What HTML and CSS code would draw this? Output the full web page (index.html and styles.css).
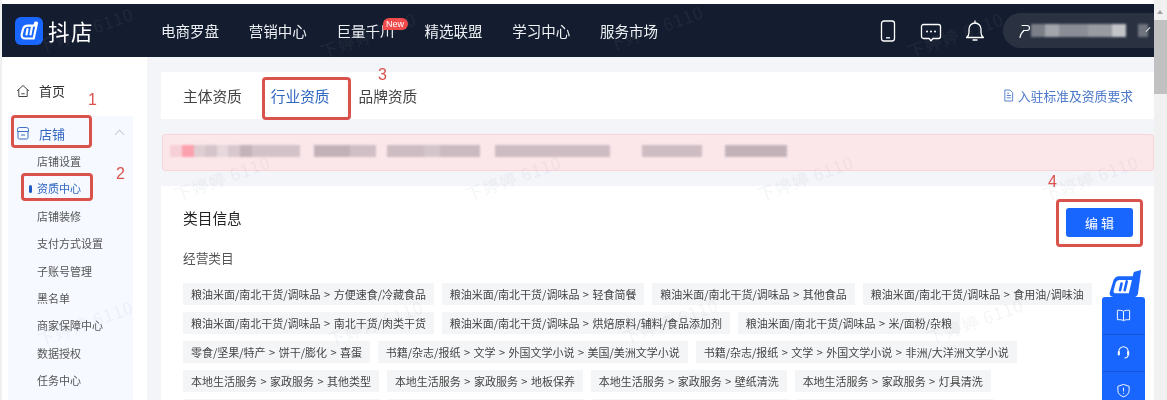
FILE: index.html
```html
<!DOCTYPE html>
<html lang="zh-CN">
<head>
<meta charset="utf-8">
<title>抖店 资质中心</title>
<link rel="stylesheet" href="styles.css">
</head>
<body>
<div class="page">
  <div class="main">
    <header class="topbar">
      <div class="brand">
        <svg class="brand-icon" viewBox="0 0 28 28"><rect width="28" height="28" rx="6" fill="#1966ff"/><path d="M21.500 5.500h-1.200l-.9 3.200H13c-3 0-4.400 1.300-5 3.600L6.800 17c-.6 2.800.6 4.500 3.400 4.500h8.500L22 6z" fill="none" stroke="#fff" stroke-width="2.200" stroke-linejoin="round"/><path d="M12.500 12l-1 5.500M17 9.500l-1.500 8" stroke="#fff" stroke-width="2.200" stroke-linecap="round"/></svg>
        <span class="brand-name">抖店</span>
      </div>
      <nav class="nav">
        <span>电商罗盘</span>
        <span>营销中心</span>
        <span class="nav-new">巨量千川<i class="new-badge">New</i></span>
        <span>精选联盟</span>
        <span>学习中心</span>
        <span>服务市场</span>
      </nav>
      <div class="tools">
        <svg class="tool" viewBox="0 0 20 24"><rect x="3.500" y="2" width="13" height="20" rx="2.500" fill="none" stroke="#fff" stroke-width="1.300"/><path d="M8 18.800h4" stroke="#fff" stroke-width="1.300"/></svg>
        <svg class="tool tool-chat" viewBox="0 0 22 22"><path d="M3.500 3.500h15a2 2 0 0 1 2 2v10a2 2 0 0 1-2 2h-5.500L11 19.800 9 17.500H3.500a2 2 0 0 1-2-2v-10a2 2 0 0 1 2-2z" fill="none" stroke="#fff" stroke-width="1.300"/><circle cx="7" cy="10.500" r="1" fill="#fff"/><circle cx="11" cy="10.500" r="1" fill="#fff"/><circle cx="15" cy="10.500" r="1" fill="#fff"/></svg>
        <svg class="tool tool-bell" viewBox="0 0 22 24"><path d="M2.500 18.500c1.500-1 2.500-2.500 2.500-5V10a6 6 0 0 1 12 0v3.500c0 2.500 1 4 2.500 5z" fill="none" stroke="#fff" stroke-width="1.300" stroke-linejoin="round"/><path d="M9 21h4M11 2v2" stroke="#fff" stroke-width="1.300" stroke-linecap="round"/></svg>
        <div class="user">
          <svg class="user-icon" viewBox="0 0 12 16"><path d="M2 14.500c.5-3 2-5.500 4-7M4 2.500h5a2.500 2.500 0 0 1 0 5H5.500" fill="none" stroke="#fff" stroke-width="1.200" stroke-linecap="round"/></svg>
          <div class="user-blur"></div>
          <div class="user-blur user-blur-2"></div>
          <span class="user-arrow"></span>
        </div>
      </div>
    </header>
    <div class="body">
      <aside class="sidebar">
        <div class="home">
          <svg class="side-icon" viewBox="0 0 14 14"><path d="M1 7 7 1.500 13 7M2.800 5.500V12.500h8.400V5.500M5.300 9.800h3.400" fill="none" stroke="#444" stroke-width="1"/></svg>
          <span>首页</span>
        </div>
        <div class="group">
          <div class="group-head">
            <svg class="side-icon" viewBox="0 0 14 14"><path d="M3.500 1.500h7a2 2 0 0 1 2 2v2H1.500v-2a2 2 0 0 1 2-2zM2 5.500v6a1.500 1.500 0 0 0 1.500 1.500h7a1.500 1.500 0 0 0 1.500-1.500v-6M5 9h4" fill="none" stroke="#3d6fc4" stroke-width="1"/></svg>
            <span>店铺</span>
            <i class="chevron"></i>
          </div>
          <ul class="submenu">
            <li>店铺设置</li>
            <li class="active">资质中心</li>
            <li>店铺装修</li>
            <li>支付方式设置</li>
            <li>子账号管理</li>
            <li>黑名单</li>
            <li>商家保障中心</li>
            <li>数据授权</li>
            <li>任务中心</li>
          </ul>
        </div>
      </aside>
      <main class="content">
        <section class="tabs">
          <span class="tab">主体资质</span>
          <span class="tab tab-active">行业资质</span>
          <span class="tab">品牌资质</span>
          <a class="standard">
            <svg class="doc-icon" viewBox="0 0 12 14"><path d="M2 1h5.500L10.500 4v9H2z M4 7h4.500M4 9.500h4.500M4.500 4.500h2" fill="none" stroke="#4a78c8" stroke-width="1"/></svg>
            入驻标准及资质要求
          </a>
        </section>
        <section class="alert">
          <div class="alert-blur"></div>
        </section>
        <section class="card">
          <div class="card-head">
            <h2>类目信息</h2>
            <button class="edit">编 辑</button>
          </div>
          <div class="label">经营类目</div>
          <div class="tags">
            <div class="tag-row">
              <span class="tag">粮油米面/南北干货/调味品 &gt; 方便速食/冷藏食品</span>
              <span class="tag">粮油米面/南北干货/调味品 &gt; 轻食简餐</span>
              <span class="tag">粮油米面/南北干货/调味品 &gt; 其他食品</span>
              <span class="tag">粮油米面/南北干货/调味品 &gt; 食用油/调味油</span>
            </div>
            <div class="tag-row">
              <span class="tag">粮油米面/南北干货/调味品 &gt; 南北干货/肉类干货</span>
              <span class="tag">粮油米面/南北干货/调味品 &gt; 烘焙原料/辅料/食品添加剂</span>
              <span class="tag">粮油米面/南北干货/调味品 &gt; 米/面粉/杂粮</span>
            </div>
            <div class="tag-row">
              <span class="tag">零食/坚果/特产 &gt; 饼干/膨化 &gt; 喜蛋</span>
              <span class="tag">书籍/杂志/报纸 &gt; 文学 &gt; 外国文学小说 &gt; 美国/美洲文学小说</span>
              <span class="tag">书籍/杂志/报纸 &gt; 文学 &gt; 外国文学小说 &gt; 非洲/大洋洲文学小说</span>
            </div>
            <div class="tag-row">
              <span class="tag">本地生活服务 &gt; 家政服务 &gt; 其他类型</span>
              <span class="tag">本地生活服务 &gt; 家政服务 &gt; 地板保养</span>
              <span class="tag">本地生活服务 &gt; 家政服务 &gt; 壁纸清洗</span>
              <span class="tag">本地生活服务 &gt; 家政服务 &gt; 灯具清洗</span>
            </div>
            <div class="tag-row">
              <span class="tag tag-blank"></span>
              <span class="tag tag-blank"></span>
              <span class="tag tag-blank"></span>
              <span class="tag tag-blank"></span>
            </div>
          </div>
        </section>
      </main>
    </div>
  </div>
  <div class="scrollbar">
    <div class="scroll-up"></div>
    <div class="scroll-thumb"></div>
  </div>

  <svg class="float-logo" viewBox="0 0 34 28"><path d="M32.500 1 25.500 3 24.500 7H12C8 7 6.500 9 5.500 12L2.500 22C1.500 25 3 27 6 27H26C28 27 29 26 29.500 24Z" fill="#1966ff"/><path d="M12 10.500H23.700L20.700 23.500H8C6.500 23.500 5.700 22.500 6 21L8 13.500C8.500 11.500 10 10.500 12 10.500Z" fill="#fff"/><path d="M13.700 14 12.200 20.500M18.700 12 16.700 20.500" stroke="#1966ff" stroke-width="2.500" stroke-linecap="round"/></svg>
  <div class="float-panel">
    <div class="float-item">
      <svg viewBox="0 0 16 16"><path d="M8 3.500C6.500 2.500 4 2.300 1.500 2.500v10c2.500-.2 5 0 6.500 1 1.500-1 4-1.200 6.500-1v-10C12 2.300 9.500 2.500 8 3.500zM8 3.500v10" fill="none" stroke="#fff" stroke-width="1"/></svg>
    </div>
    <div class="float-item">
      <svg viewBox="0 0 16 16"><path d="M3 9V6.800a5 5 0 0 1 10 0V9M13 10c0 2-1.500 3.800-4 3.800" fill="none" stroke="#fff" stroke-width="1.100"/><path d="M3 7.500v2.500M13 7.500v2.500" stroke="#fff" stroke-width="2.200" stroke-linecap="round"/></svg>
    </div>
    <div class="float-item">
      <svg viewBox="0 0 16 16"><path d="M8 1.500 14 3.500V8c0 3.500-2.500 5.500-6 6.800C4.500 13.500 2 11.500 2 8V3.500z" fill="none" stroke="#fff" stroke-width="1"/><path d="M8 5v4M8 10.500v1" stroke="#fff" stroke-width="1"/></svg>
    </div>
  </div>

  <div class="mark mark-box box-1"></div>
  <div class="mark mark-box box-2"></div>
  <div class="mark mark-box box-3"></div>
  <div class="mark mark-box box-4"></div>
  <span class="mark num num-1">1</span>
  <span class="mark num num-2">2</span>
  <span class="mark num num-3">3</span>
  <span class="mark num num-4">4</span>

  <span class="wm wm-dark w1">下婷婷 6110</span>
  <span class="wm wm-dark w2">下婷婷 6110</span>
  <span class="wm wm-dark w3">下婷婷 6110</span>
  <span class="wm wm-dark w4">下婷婷 6110</span>
  <span class="wm w5">下婷婷 6110</span>
  <span class="wm w6">下婷婷 6110</span>
  <span class="wm w7">下婷婷 6110</span>
  <span class="wm w8">下婷婷 6110</span>
  <span class="wm w9">下婷婷 6110</span>
  <span class="wm w10">下婷婷 6110</span>
  <span class="wm w11">下婷婷 6110</span>
  <span class="wm w12">下婷婷 6110</span>
</div>
</body>
</html>
```
FILE: styles.css
```css
* { box-sizing: border-box; }
html, body { margin: 0; height: 400px; overflow: hidden; background: #fff; }
body { font-family: "Noto Sans CJK SC", "Noto Sans", sans-serif; color: #333; }
ul { list-style: none; margin: 0; padding: 0; }

.page { position: relative; display: flex; width: 1167px; height: 400px; overflow: hidden; filter: blur(0.45px); padding-top: 4px; border-left: 2px solid #eef0f2; background: #fff; }
.main { width: 1152px; display: flex; flex-direction: column; }

.topbar { height: 53px; background: #141d2f; display: flex; align-items: center; color: #fff; flex: none; }
.brand { display: flex; align-items: center; width: 159px; padding-left: 13px; }
.brand-icon { width: 28px; height: 28px; }
.brand-name { font-size: 21.500px; margin-left: 5px; letter-spacing: 1.500px; }
.nav { display: flex; gap: 29.800px; font-size: 14.500px; color: #eef0f4; }
.nav-new { position: relative; }
.new-badge { position: absolute; right: -13px; top: -2px; background: #f04a4a; color: #fff; font-size: 9px; font-style: normal; line-height: 12px; padding: 0 3.500px; border-radius: 6px 6px 6px 0; font-family: "Liberation Sans", sans-serif; }
.tools { margin-left: auto; display: flex; align-items: center; }
.tool { width: 20px; height: 24px; }
.tool-chat { width: 22px; height: 22px; margin-left: 22px; margin-top: 2px; }
.tool-bell { width: 22px; height: 24px; margin-left: 22px; }
.user { width: 151px; height: 35px; margin-left: 17px; background: #2a3242; border-radius: 18px 0 0 18px; display: flex; align-items: center; padding-left: 15px; position: relative; }
.user-icon { width: 12px; height: 16px; flex: none; }
.user-blur { width: 95px; height: 13px; margin-left: 1px; background: linear-gradient(90deg, #7a7f88 0 15%, #a2a5ab 15% 30%, #8a8d95 30% 60%, #989ba1 60% 85%, #c2c4c8 85% 100%); filter: blur(1px); }
.user-blur-2 { width: 10px; margin-left: 12px; background: #6f747e; }
.user-arrow { position: absolute; right: 3px; top: 16px; width: 6px; height: 1px; background: #ddd; transform: rotate(-45deg); }

.body { flex: 1; display: flex; min-height: 0; }
.sidebar { width: 145px; background: #fff; padding: 0 14px 0 6px; flex: none; }
.home { height: 59px; display: flex; align-items: center; padding-left: 8px; font-size: 13px; color: #333; gap: 9px; padding-top: 8px; }
.side-icon { width: 14px; height: 14px; flex: none; }
.group { background: #f6f9ff; height: 290px; }
.group-head { height: 32px; display: flex; align-items: center; padding: 2px 0 0 8px; gap: 9px; color: #2f66c0; font-size: 13px; position: relative; }
.chevron { position: absolute; left: 108px; top: 15px; width: 7px; height: 7px; border-left: 1px solid #c9ccd2; border-top: 1px solid #c9ccd2; transform: rotate(45deg); }
.submenu { padding-left: 29px; font-size: 11px; color: #555; }
.submenu li { height: 27.400px; line-height: 27.400px; position: relative; }
.submenu .active { color: #2f66c0; }
.submenu .active::before { content: ""; position: absolute; left: -8px; top: 10px; width: 3px; height: 8px; border-radius: 2px; background: #1f5bc4; }

.content { flex: 1; background: #f4f5f9; padding: 15px 0 0 14px; min-width: 0; }
.tabs { height: 47px; background: #fff; display: flex; align-items: center; padding: 0 21px 0 22px; font-size: 14.700px; color: #444; gap: 29px; }
.tab-active { color: #2f66c0; }
.standard { margin-left: auto; display: flex; align-items: center; gap: 4px; color: #4a78c8; font-size: 12.800px; }
.doc-icon { width: 11px; height: 13px; }
.alert { height: 37px; margin: 15px 0 15px 1px; background: #fbe7ea; border: 1px solid #f6d5da; border-radius: 3px; padding: 10px 0 0 7px; }
.alert-blur { width: 620px; height: 12px; filter: blur(1px); background: linear-gradient(90deg, #f6d0d6 0 12px, #fda0ad 12px 24px, #dfcfd3 24px 35px, #d5c4c9 35px 47px, #e6d8dc 47px 58px, #d8c8cd 58px 70px, #c4b3b9 70px 82px, #d3c2c8 82px 130px, #fbe7ea 130px 144px, #c2b2b8 144px 180px, #d0bfc5 180px 206px, #fbe7ea 206px 217px, #cdbcc2 217px 254px, #d4c5ca 254px 270px, #cbbac0 270px 310px, #fbe7ea 310px 325px, #cdbcc2 325px 440px, #fbe7ea 440px 472px, #cdbcc2 472px 532px, #fbe7ea 532px 555px, #c2b2b8 555px 617px, #fbe7ea 617px); }
.card { background: #fff; height: 300px; padding: 22px 0 0 22px; }
.card-head { display: flex; align-items: flex-start; justify-content: space-between; height: 29px; padding-right: 21px; }
.card-head h2 { margin: 0; font-size: 14.700px; line-height: 20px; font-weight: 400; color: #222; }
.edit { width: 67px; height: 29px; border: 0; border-radius: 3px; background: #1966ff; color: #fff; font: inherit; font-size: 13px; padding: 0; }
.label { margin-top: 11.500px; font-size: 12.700px; color: #555; line-height: 17px; }
.tags { margin-top: 17px; display: flex; flex-direction: column; gap: 6.600px; }
.tag-row { display: flex; gap: 7.800px; }
.tag { height: 22.500px; line-height: 22.500px; padding: 0 8px; background: #f4f5f7; font-size: 11px; color: #444; white-space: nowrap; word-spacing: 1px; }
.tag-blank { width: 197px; }

.scrollbar { width: 13px; margin-left: auto; margin-top: -4px; background: #f1f1f1; position: relative; flex: none; }
.scroll-up { position: absolute; left: 3px; top: 10px; border: 3.500px solid transparent; border-bottom: 4px solid #a3a3a3; border-top: 0; }
.scroll-thumb { position: absolute; left: 0; top: 20px; width: 13px; height: 74px; background: #c1c1c1; }

.float-logo { position: absolute; left: 1105px; top: 269px; width: 36px; height: 29px; }
.float-panel { position: absolute; left: 1100px; top: 297px; width: 43px; height: 110px; background: #1966ff; border-radius: 3px 3px 0 0; }
.float-item { height: 37.500px; display: flex; align-items: center; justify-content: center; border-bottom: 1px solid #1456d8; }
.float-item svg { width: 15px; height: 15px; }

.mark { position: absolute; }
.mark-box { border: 3px solid #d9524c; border-radius: 4px; }
.box-1 { left: 9px; top: 115px; width: 81px; height: 33px; }
.box-2 { left: 19px; top: 173px; width: 72px; height: 28px; }
.box-3 { left: 260px; top: 77px; width: 89px; height: 43px; }
.box-4 { left: 1054px; top: 199px; width: 87px; height: 48px; }
.num { color: #d9524c; font-size: 16px; line-height: 18px; font-family: "Liberation Sans", sans-serif; }
.num-1 { left: 86px; top: 91px; }
.num-2 { left: 114px; top: 165px; }
.num-3 { left: 376px; top: 66px; }
.num-4 { left: 1046px; top: 173px; }

.wm { position: absolute; font-size: 17px; color: rgba(120, 125, 140, 0.08); transform: rotate(-20deg); white-space: nowrap; letter-spacing: 1px; }
.wm-dark { color: rgba(255, 255, 255, 0.05); }
.w1 { left: 33px; top: 17px; }
.w2 { left: 316px; top: 22px; }
.w3 { left: 603px; top: 15px; }
.w4 { left: 903px; top: 22px; }
.w5 { left: 170px; top: 165px; }
.w6 { left: 461px; top: 165px; }
.w7 { left: 753px; top: 165px; }
.w8 { left: 1038px; top: 165px; }
.w9 { left: 33px; top: 310px; }
.w10 { left: 323px; top: 310px; }
.w11 { left: 618px; top: 308px; }
.w12 { left: 923px; top: 308px; }
```
